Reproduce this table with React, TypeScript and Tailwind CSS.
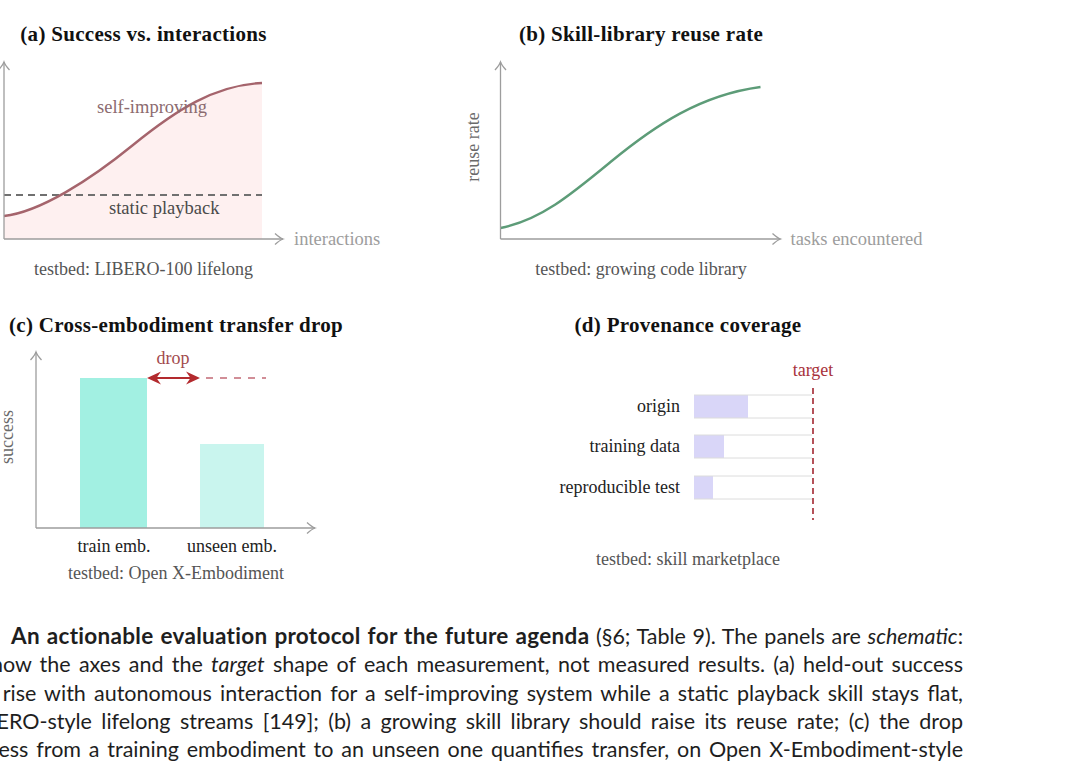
const serif = "font-['Liberation_Serif','Times_New_Roman',serif]";

function XArrow({ x, y }: { x: number; y: number }) {
  return <path d={`M${x - 8},${y - 5.5} Q${x - 3},${y - 1} ${x},${y} Q${x - 3},${y + 1} ${x - 8},${y + 5.5}`} fill="none" stroke="#9d9d9d" strokeWidth="1.3" />;
}

function YArrow({ x, y }: { x: number; y: number }) {
  return <path d={`M${x - 5.5},${y + 8} Q${x - 1},${y + 3} ${x},${y} Q${x + 1},${y + 3} ${x + 5.5},${y + 8}`} fill="none" stroke="#9d9d9d" strokeWidth="1.3" />;
}

function Axes({ x0, y0, top, right }: { x0: number; y0: number; top: number; right: number }) {
  return (
    <g>
      <line x1={x0} y1={y0} x2={x0} y2={top} stroke="#9d9d9d" strokeWidth="1.3" />
      <line x1={x0} y1={y0} x2={right} y2={y0} stroke="#9d9d9d" strokeWidth="1.3" />
      <YArrow x={x0} y={top} />
      <XArrow x={right} y={y0} />
    </g>
  );
}

function Title({ children }: { children: React.ReactNode }) {
  return <div className={`${serif} text-[21px] leading-[24px] h-[24px] font-bold tracking-[0.3px] text-[#111] whitespace-nowrap`}>{children}</div>;
}

function Testbed({ children }: { children: React.ReactNode }) {
  return <div className={`${serif} text-[18px] leading-[22px] text-[#555] whitespace-nowrap`}>{children}</div>;
}

const curveA = "M4,216 C40,212 90,180 133,145 C176,110 215,85 262,83";
const curveB = "M500,228 C540,220 570,195 610,162 C655,125 700,95 760,87";

export default function App() {
  const rows = [
    { label: "origin", y: 395, fill: 748, base: 412 },
    { label: "training data", y: 435, fill: 724, base: 452 },
    { label: "reproducible test", y: 476, fill: 713, base: 493 },
  ];

  const line = "h-[28.4px] overflow-hidden text-justify [text-align-last:justify]";

  return (
    <div className="w-[1080px] h-[767px] overflow-hidden bg-white">
      {/* top row */}
      <div className="flex pt-[22px]">
        <div className="w-[287px] flex flex-col items-center">
          <Title>(a) Success vs. interactions</Title>
          <svg width="287" height="190" viewBox="0 55 287 190" overflow="visible" className={`mt-[9px] ${serif}`}>
            <path d={`${curveA} L262,239 L4,239 Z`} fill="#fdeaea" opacity="0.7" />
            <line x1="4" y1="195" x2="262" y2="195" stroke="#707070" strokeWidth="2.2" strokeDasharray="7 5" />
            <path d={curveA} fill="none" stroke="#a5646c" strokeWidth="2.4" />
            <Axes x0={4} y0={239} top={62} right={283} />
            <text x="97" y="113" fontSize="18.5" fill="#8c6b6f">self-improving</text>
            <text x="109" y="214" fontSize="18.5" fill="#4a4a4a">static playback</text>
            <text x="294" y="245" fontSize="18.5" fill="#9d9d9d">interactions</text>
          </svg>
          <div className="mt-[13px]">
            <Testbed>testbed: LIBERO-100 lifelong</Testbed>
          </div>
        </div>

        <div className="w-[287px] ml-[210.5px] flex flex-col items-center">
          <Title>(b) Skill-library reuse rate</Title>
          <svg width="287" height="190" viewBox="497.5 55 287 190" overflow="visible" className={`mt-[9px] ${serif}`}>
            <path d={curveB} fill="none" stroke="#5d9c78" strokeWidth="2.4" />
            <Axes x0={500} y0={239} top={62} right={780} />
            <text x="478" y="147" fontSize="18" fill="#6a6a6a" textAnchor="middle" transform="rotate(-90 478 147)">reuse rate</text>
            <text x="790" y="245" fontSize="18.5" fill="#9d9d9d">tasks encountered</text>
          </svg>
          <div className="mt-[13px]">
            <Testbed>testbed: growing code library</Testbed>
          </div>
        </div>
      </div>

      {/* bottom row */}
      <div className="flex mt-[32.6px]">
        <div className="w-[352px] flex flex-col items-center">
          <Title>(c) Cross-embodiment transfer drop</Title>
          <svg width="352" height="210" viewBox="0 345 352 210" overflow="visible" className={`mt-[8.4px] ${serif}`}>
            <rect x="80" y="378" width="67" height="150" fill="#a2f0e2" />
            <rect x="200" y="444" width="64" height="84" fill="#c9f5ee" />
            <Axes x0={36} y0={528} top={352} right={315} />
            <line x1="206" y1="378" x2="266" y2="378" stroke="#c26a76" strokeWidth="1.7" strokeDasharray="7 7" />
            <line x1="153" y1="378" x2="194" y2="378" stroke="#b32a2e" strokeWidth="2.2" />
            <polygon points="147,378 161,371.5 156.5,378 161,384.5" fill="#b32a2e" />
            <polygon points="200,378 186,371.5 190.5,378 186,384.5" fill="#b32a2e" />
            <text x="173" y="364" fontSize="18" fill="#a24a4c" textAnchor="middle">drop</text>
            <text x="13" y="437" fontSize="18" fill="#6a6a6a" textAnchor="middle" transform="rotate(-90 13 437)">success</text>
            <text x="114" y="552" fontSize="18" fill="#222" textAnchor="middle">train emb.</text>
            <text x="232" y="552" fontSize="18" fill="#222" textAnchor="middle">unseen emb.</text>
          </svg>
          <div className="mt-[7.4px]">
            <Testbed>testbed: Open X-Embodiment</Testbed>
          </div>
        </div>

        <div className="w-[352px] ml-[160px] flex flex-col items-center">
          <Title>(d) Provenance coverage</Title>
          <svg width="352" height="195" viewBox="512 345 352 195" overflow="visible" className={`mt-[8.4px] ${serif}`}>
            {rows.map((r) => (
              <g key={r.label}>
                <rect x="694" y={r.y} width={r.fill - 694} height="23" fill="#d9d6f8" />
                <line x1="694" y1={r.y} x2="812" y2={r.y} stroke="#dcdcdc" strokeWidth="1" />
                <line x1="694" y1={r.y + 23} x2="812" y2={r.y + 23} stroke="#dcdcdc" strokeWidth="1" />
                <text x="680" y={r.base} fontSize="18" fill="#222" textAnchor="end">{r.label}</text>
              </g>
            ))}
            <line x1="813" y1="388" x2="813" y2="520" stroke="#a8333c" strokeWidth="1.7" strokeDasharray="6 4" />
            <text x="813" y="376" fontSize="18" fill="#a8333c" textAnchor="middle">target</text>
          </svg>
          <div className="mt-[8px]">
            <Testbed>testbed: skill marketplace</Testbed>
          </div>
        </div>
      </div>

      {/* caption */}
      <div className="ml-[-68px] w-[1031px] mt-[37.4px] font-['Lato','Noto_Sans',sans-serif] text-[21.5px] leading-[28.4px] text-[#1e1e1e]">
        <div className={`pl-[79px] ${line}`}>
          <b className="font-bold text-[22.5px] tracking-[0.3px]">An actionable evaluation protocol for the future agenda</b> (§6; Table 9). The panels are <i>schematic</i>:
        </div>
        <div className={line}>
          they show the axes and the <i>target</i> shape of each measurement, not measured results. (a) held-out success
        </div>
        <div className={line}>
          should rise with autonomous interaction for a self-improving system while a static playback skill stays flat,
        </div>
        <div className={line}>
          on LIBERO-style lifelong streams [149]; (b) a growing skill library should raise its reuse rate; (c) the drop
        </div>
        <div className={line}>
          in success from a training embodiment to an unseen one quantifies transfer, on Open X-Embodiment-style
        </div>
      </div>
    </div>
  );
}
